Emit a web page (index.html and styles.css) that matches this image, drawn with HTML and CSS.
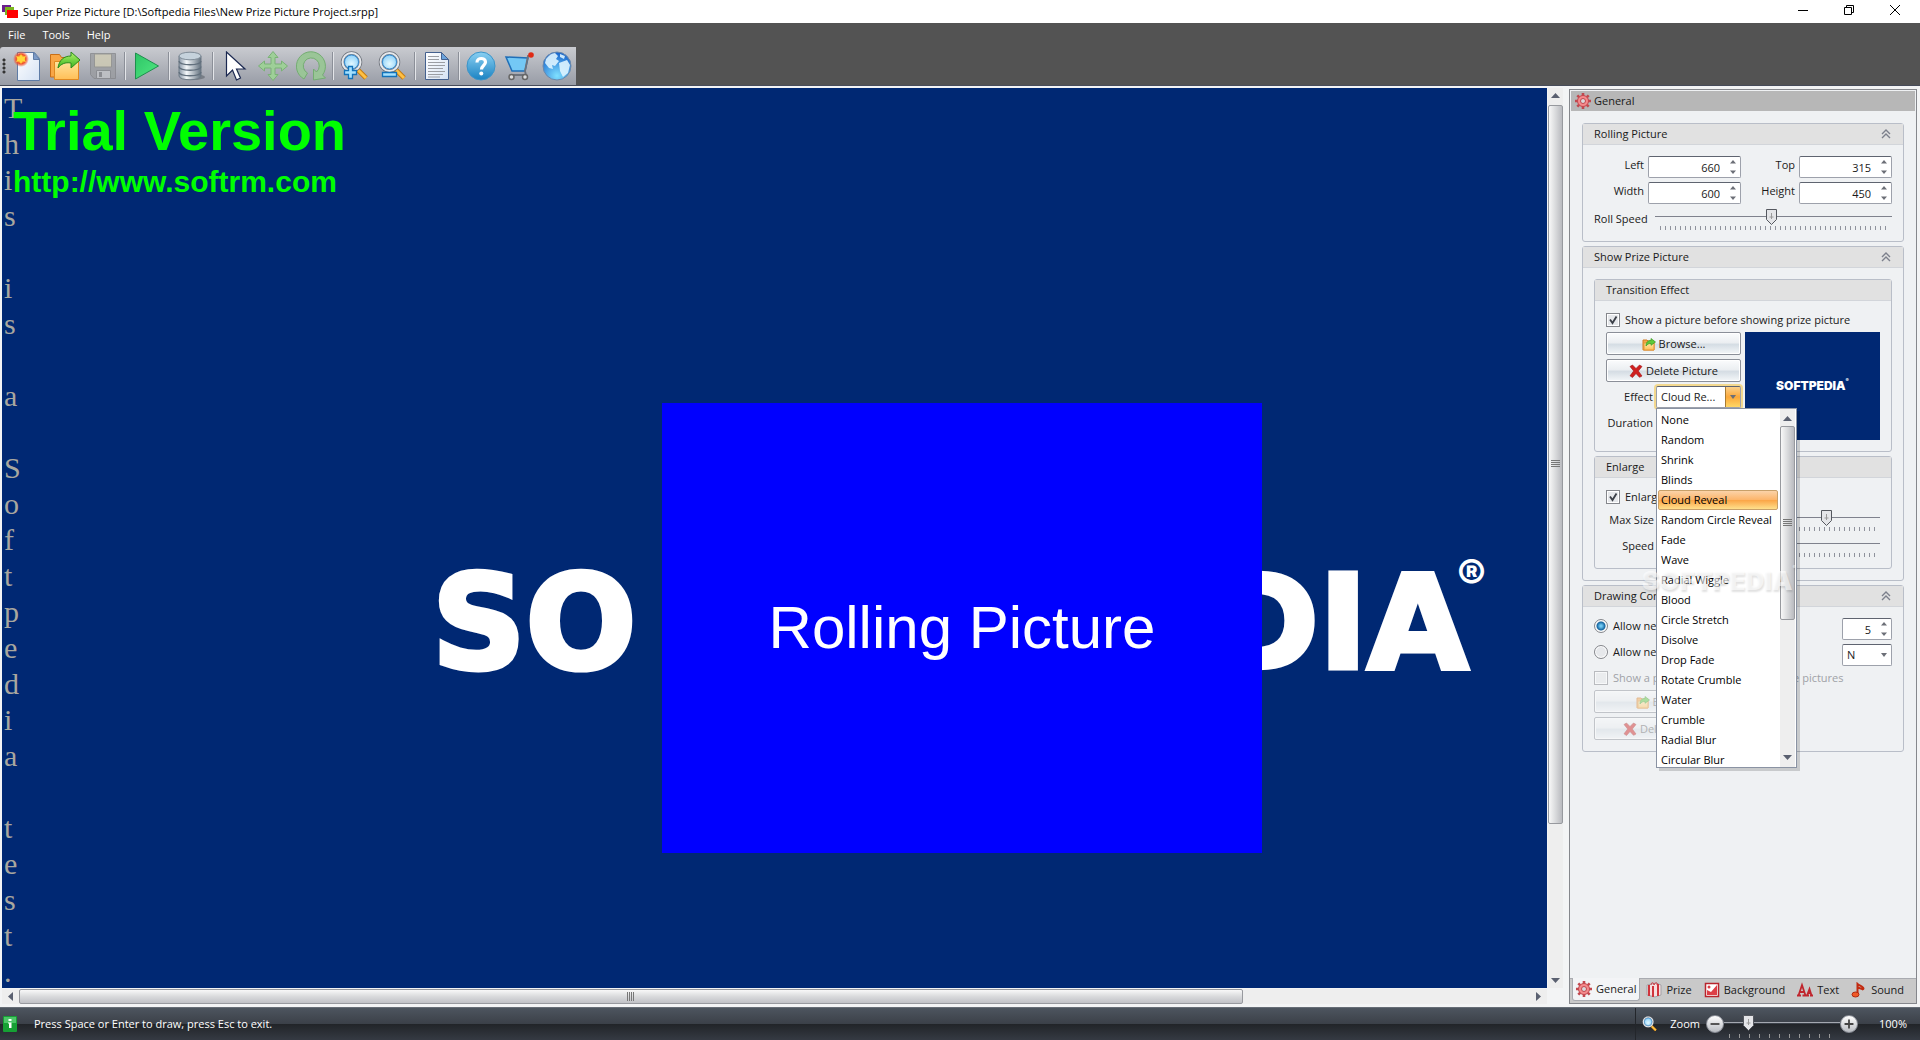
FILE: index.html
```html
<!DOCTYPE html>
<html lang="en">
<head>
<meta charset="utf-8">
<title>Super Prize Picture</title>
<link rel="stylesheet" href="styles.css">
</head>
<body>
<svg class="defs" width="0" height="0" aria-hidden="true">
  <defs>
    <linearGradient id="g-page" x1="0" y1="0" x2="1" y2="1"><stop offset="0" stop-color="#fff"/><stop offset="1" stop-color="#d5e2f4"/></linearGradient>
    <linearGradient id="g-folder" x1="0" y1="0" x2="0" y2="1"><stop offset="0" stop-color="#ffe9a8"/><stop offset="1" stop-color="#ffbf57"/></linearGradient>
    <linearGradient id="g-green" x1="0" y1="0" x2="0" y2="1"><stop offset="0" stop-color="#b5f26a"/><stop offset="1" stop-color="#38b521"/></linearGradient>
    <linearGradient id="g-play" x1="0" y1="0" x2="1" y2="1"><stop offset="0" stop-color="#2dc566"/><stop offset="1" stop-color="#52e882"/></linearGradient>
    <linearGradient id="g-db" x1="0" y1="0" x2="1" y2="0"><stop offset="0" stop-color="#8a98a8"/><stop offset=".35" stop-color="#f4f8fb"/><stop offset="1" stop-color="#64727f"/></linearGradient>
    <radialGradient id="g-lens" cx=".5" cy=".6" r=".6"><stop offset="0" stop-color="#e2f8ff"/><stop offset="1" stop-color="#7cc9f8"/></radialGradient>
    <radialGradient id="g-spark"><stop offset="0" stop-color="#fff27a"/><stop offset=".35" stop-color="#ffb62e"/><stop offset=".6" stop-color="#f0502a"/><stop offset="1" stop-color="#f0502a" stop-opacity="0"/></radialGradient>
    <linearGradient id="g-help" x1="0" y1="0" x2="0" y2="1"><stop offset="0" stop-color="#8ad0f2"/><stop offset="1" stop-color="#1a82c2"/></linearGradient>
    <radialGradient id="g-globe" cx=".5" cy=".85" r=".8"><stop offset="0" stop-color="#7fe0ff"/><stop offset="1" stop-color="#1b69cf"/></radialGradient>
    <symbol id="i-browse" viewBox="0 0 14 14">
      <path d="M1 3h4l1 1h6v9H1z" fill="#f3a64a" stroke="#d67d22"/>
      <path d="M2 6h10v7H2z" fill="url(#g-folder)" stroke="#e39636"/>
      <path d="M4 9c0-4 2-5.500 5-5.500V1.500l4.500 3.500L9 8.300V6.500C7 6.500 5.500 7 4 9z" fill="#5dc93a" stroke="#3a9b22" stroke-width=".7"/>
    </symbol>
    <symbol id="i-delete" viewBox="0 0 14 14">
      <path d="M1 2.500 3.500 1 7 4.500 10.500 1 13 2.500 9.300 7 13 12l-2.500 1.300L7 9.500l-3.500 4L1 11.800 4.700 7z" fill="#cf1f1f" stroke="#a01212" stroke-width=".6"/>
    </symbol>
    <symbol id="i-gear" viewBox="0 0 16 16">
      <g stroke="#c2484e" stroke-width="2.600"><path d="M8 0v16M0 8h16M2.300 2.300l11.400 11.400M13.700 2.300 2.300 13.700"/></g>
      <circle cx="8" cy="8" r="5.500" fill="#f58a8c" stroke="#c2484e"/>
      <circle cx="8" cy="8" r="2.500" fill="#d9d9dc" stroke="#c2484e"/>
    </symbol>
    <symbol id="i-up" viewBox="0 0 10 10"><path d="M1 5l4-4 4 4M1 9l4-4 4 4" fill="none" stroke="#7c808c" stroke-width="1.400"/></symbol>
    <symbol id="i-spin" viewBox="0 0 6 14"><path d="M0 3.500 3 0l3 3.500zM0 10.500h6L3 14z" fill="#6c6f77"/></symbol>
    <symbol id="i-lens" viewBox="0 0 30 30">
      <path d="M17 18l9 9" stroke="#c47a10" stroke-width="5"/><path d="M18 19l8 8" stroke="#ffc043" stroke-width="3"/>
      <circle cx="11.500" cy="11" r="9" fill="url(#g-lens)" stroke="#70757d" stroke-width="3.500"/>
      <circle cx="11.500" cy="11" r="9" fill="none" stroke="#e6e9ed" stroke-width="2"/>
      <circle cx="11.500" cy="11" r="7" fill="none" stroke="#3589cf"/>
    </symbol>
  </defs>
</svg>

<header class="titlebar">
  <svg class="app-icon" viewBox="0 0 16 14" aria-hidden="true"><path fill="#6b1f8e" d="M0 0h9v7H0z"/><path fill="#7ab51d" d="M3 2h9v8H3z"/><path fill="#f00" d="M5 5h11v8H5z"/></svg>
  <h1>Super Prize Picture [D:\Softpedia Files\New Prize Picture Project.srpp]</h1>
  <div class="win-buttons">
    <button aria-label="Minimize"><svg viewBox="0 0 10 10"><path d="M0 5.500h10"/></svg></button>
    <button aria-label="Restore"><svg viewBox="0 0 10 10"><path d="M.5 2.500h7v7h-7zM2.500 2.500v-2h7v7h-2"/></svg></button>
    <button aria-label="Close"><svg viewBox="0 0 10 10"><path d="M0 0l10 10M10 0 0 10"/></svg></button>
  </div>
</header>

<nav class="menubar"><button>File</button><button>Tools</button><button>Help</button></nav>

<div class="toolbar-row">
  <div class="toolbar" role="toolbar">
    <span class="grip"></span>
    <button aria-label="New"><svg viewBox="0 0 30 30"><path d="M5.500 1.500h17l5 6v22h-22z" fill="url(#g-page)" stroke="#5f7ca6"/><path d="M21.500 1.500v7h6z" fill="#7d9cc9" stroke="#5f7ca6"/><circle cx="9" cy="8" r="8" fill="url(#g-spark)"/><path d="M9 3l1.500 3L14 5l-1.500 3 1.500 3-3.500-1L9 13l-1.500-3L4 11l1.500-3L4 5l3.500 1z" fill="#ffd83a"/></svg></button>
    <button aria-label="Open"><svg viewBox="0 0 30 30"><path d="M.5 26V3.500h9l2 3h13V26z" fill="#f8a646" stroke="#c86f17"/><path d="M4.500 10.500h10l3-3h11v21h-24z" fill="url(#g-folder)" stroke="#e08a22"/><path d="M8 17c1-8 6-12 13-12V1l9 8-9 8v-5c-6-1-10 1-13 5z" fill="url(#g-green)" stroke="#2a8a1d"/></svg></button>
    <button aria-label="Save" class="dim"><svg viewBox="0 0 30 30"><path d="M2.500 2.500h25v25H6l-3.500-4z" fill="#9b9da1" stroke="#85878b"/><path d="M6.500 3h17v13h-17z" fill="#cfcbb4" stroke="#8f8f8b"/><path d="M8.500 19.500h14v8h-14z" fill="#c3c5c8" stroke="#85878b"/><path d="M11 21h3v5h-3z" fill="#85878b"/></svg></button>
    <i></i>
    <button aria-label="Run"><svg viewBox="0 0 30 30"><path d="M3.500 2v26L26.500 15z" fill="url(#g-play)" stroke="#1f8f4e"/></svg></button>
    <i></i>
    <button aria-label="Database"><svg viewBox="0 0 30 30"><ellipse cx="18" cy="26" rx="11" ry="3" fill="#5c626b" opacity=".6"/><path d="M3 5v20c0 5 22 5 22 0V5z" fill="url(#g-db)" stroke="#6e7a86"/><path d="M3 10c0 5 22 5 22 0M3 15.500c0 5 22 5 22 0M3 21c0 5 22 5 22 0" fill="none" stroke="#62707d" stroke-width="1.300"/><ellipse cx="14" cy="5" rx="11" ry="3.800" fill="#c5d2dc" stroke="#7f8c98"/></svg></button>
    <i></i>
    <button aria-label="Select"><svg viewBox="0 0 30 30"><path d="M6.500 1v24l6-6 4 10 4-2-4-9h8.500z" fill="#fff" stroke="#1b2850" stroke-width="1.200"/></svg></button>
    <button aria-label="Move"><svg viewBox="0 0 30 30"><path d="M15 .5l5 6h-3V13h6.500v-3l6 5-6 5v-3H17v6.500h3l-5 6-5-6h3V17H6.500v3l-6-5 6-5v3H13V6.500h-3z" fill="#9ecf98" stroke="#7ab276"/></svg></button>
    <button aria-label="Rotate"><svg viewBox="0 0 30 30"><path d="M8 28A14.500 14.500 0 1 1 26.500 24l3 3-12 2v-11l3 3a8 8 0 1 0-9 1z" fill="#9ac597" stroke="#74ad72"/></svg></button>
    <i></i>
    <button aria-label="Zoom in"><svg viewBox="0 0 30 30"><use href="#i-lens"/><path d="M8.500 15.500h4v4h4v4h-4v4h-4v-4h-4v-4h4z" fill="#a4e1ff" stroke="#1273bb" stroke-width="1.300"/></svg></button>
    <button aria-label="Zoom out"><svg viewBox="0 0 30 30"><use href="#i-lens"/><path d="M4.500 21.500h14v4h-14z" fill="#a4e1ff" stroke="#1273bb" stroke-width="1.300"/></svg></button>
    <i></i>
    <button aria-label="Report"><svg viewBox="0 0 30 30"><path d="M3.500 1.500h16l7 7v20h-23z" fill="url(#g-page)" stroke="#44618f"/><path d="M19.500 1.500v7h7z" fill="#6aa3dc" stroke="#44618f"/><path d="M6 5.500h11M6 8.500h11M6 11.500h17M6 14.500h17M6 17.500h15M6 20.500h17M6 23.500h15M6 26h12" stroke="#9a9da3"/></svg></button>
    <i></i>
    <button aria-label="Help"><svg viewBox="0 0 30 30"><circle cx="15" cy="15" r="14" fill="url(#g-help)" stroke="#3b94c9"/><path d="M11 11.500c0-5.500 8.500-5 8.500-.5 0 3.500-4 3.500-4 7.500" fill="none" stroke="#fff" stroke-width="3.200"/><circle cx="15.300" cy="22.500" r="2" fill="#fff"/></svg></button>
    <button aria-label="Buy"><svg viewBox="0 0 30 30"><path d="M2 6l22 1-3 13H8z" fill="#74c8f5" stroke="#1f6fb8" stroke-width="1.500"/><path d="M27 5h-3l-3 15 1 4H6" fill="none" stroke="#6d737d" stroke-width="1.800"/><circle cx="7.500" cy="26" r="2.500" fill="#ddd" stroke="#666" stroke-width="1.500"/><circle cx="21" cy="26" r="2.500" fill="#ddd" stroke="#666" stroke-width="1.500"/><circle cx="27" cy="4" r="2.800" fill="#e02a14"/></svg></button>
    <button aria-label="Website"><svg viewBox="0 0 30 30"><circle cx="15" cy="15" r="14" fill="url(#g-globe)" stroke="#6b88aa"/><path d="M4 8c3-4 6-6 9-6l3 3-2 3 3 2-4 5-3-1 1 4-4-1-4-5zM17 12l8-3 3 5-2 8-5 4-3-6zM18 3l5 2-1 3-4-2z" fill="#def4ff" opacity=".9"/></svg></button>
  </div>
</div>

<main class="workspace">
  <section class="viewer">
    <div class="canvas">
      <span class="brand brand-left">SO</span>
      <span class="brand brand-right">DIA</span>
      <span class="brand-mark">®</span>
      <p class="vertical-text">T
h
i
s

i
s

a

S
o
f
t
p
e
d
i
a

t
e
s
t
.</p>
      <div class="trial"><strong>Trial Version</strong><a href="http://www.softrm.com">http://www.softrm.com</a></div>
      <div class="rolling">Rolling Picture</div>
    </div>
    <div class="vscroll">
      <svg viewBox="0 0 9 5"><path d="M0 5h9L4.500 0z"/></svg>
      <div class="track"><div class="thumb"><b></b></div></div>
      <svg viewBox="0 0 9 5"><path d="M0 0h9L4.500 5z"/></svg>
    </div>
    <div class="hscroll">
      <svg viewBox="0 0 5 9"><path d="M5 0v9L0 4.500z"/></svg>
      <div class="track"><div class="thumb"><b></b></div></div>
      <svg viewBox="0 0 5 9"><path d="M0 0v9l5-4.500z"/></svg>
    </div>
  </section>

  <aside class="panel">
    <h2 class="panel-title"><svg class="ic16"><use href="#i-gear"/></svg>General</h2>
    <div class="panel-body">
      <section class="group">
        <h3>Rolling Picture <svg class="ic10"><use href="#i-up"/></svg></h3>
        <div class="group-body">
          <div class="bounds">
            <label for="left">Left</label><span class="spin"><input id="left" type="number" value="660"><svg><use href="#i-spin"/></svg></span>
            <label for="top">Top</label><span class="spin"><input id="top" type="number" value="315"><svg><use href="#i-spin"/></svg></span>
            <label for="width">Width</label><span class="spin"><input id="width" type="number" value="600"><svg><use href="#i-spin"/></svg></span>
            <label for="height">Height</label><span class="spin"><input id="height" type="number" value="450"><svg><use href="#i-spin"/></svg></span>
          </div>
          <div class="slide-row"><label for="roll" class="w56">Roll Speed</label><span class="slider"><input id="roll" type="range" value="49"></span></div>
        </div>
      </section>

      <section class="group">
        <h3>Show Prize Picture <svg class="ic10"><use href="#i-up"/></svg></h3>
        <div class="group-body">
          <section class="group">
            <h3>Transition Effect</h3>
            <div class="group-body">
              <label class="check"><input type="checkbox" checked>Show a picture before showing prize picture</label>
              <div class="transition">
                <div class="stack">
                  <button class="btn"><svg class="ic14"><use href="#i-browse"/></svg>Browse...</button>
                  <button class="btn"><svg class="ic14"><use href="#i-delete"/></svg>Delete Picture</button>
                  <div class="field">
                    <label for="effect">Effect</label>
                    <div class="combo open">
                      <select id="effect"><option>Cloud Re...</option></select>
                      <div class="popup">
                        <ul role="listbox" aria-label="Effect">
                          <li role="option">None</li><li role="option">Random</li><li role="option">Shrink</li><li role="option">Blinds</li>
                          <li role="option" aria-selected="true">Cloud Reveal</li><li role="option">Random Circle Reveal</li><li role="option">Fade</li>
                          <li role="option">Wave</li><li role="option">Radial Wiggle</li><li role="option">Blood</li><li role="option">Circle Stretch</li>
                          <li role="option">Disolve</li><li role="option">Drop Fade</li><li role="option">Rotate Crumble</li><li role="option">Water</li>
                          <li role="option">Crumble</li><li role="option">Radial Blur</li><li role="option">Circular Blur</li>
                        </ul>
                        <div class="vscroll">
                          <svg viewBox="0 0 9 5"><path d="M0 5h9L4.500 0z"/></svg>
                          <div class="track"><div class="thumb"><b></b></div></div>
                          <svg viewBox="0 0 9 5"><path d="M0 0h9L4.500 5z"/></svg>
                        </div>
                      </div>
                    </div>
                  </div>
                  <div class="field"><label for="duration">Duration</label><span class="spin"><input id="duration" type="number"></span></div>
                </div>
                <div class="preview"><span>SOFTPEDIA<sup>®</sup></span></div>
              </div>
            </div>
          </section>
          <section class="group">
            <h3>Enlarge</h3>
            <div class="group-body">
              <label class="check"><input type="checkbox" checked>Enlarge</label>
              <div class="slide-row"><label for="max" class="w48">Max Size</label><span class="slider"><input id="max" type="range" value="77"></span></div>
              <div class="slide-row"><label for="speed" class="w48">Speed</label><span class="slider"><input id="speed" type="range" value="40"></span></div>
            </div>
          </section>
        </div>
      </section>

      <section class="group">
        <h3>Drawing Control <svg class="ic10"><use href="#i-up"/></svg></h3>
        <div class="group-body">
          <div class="option-row"><label class="check"><input type="radio" name="next" checked>Allow next</label><span class="spin"><input type="number" value="5" aria-label="Seconds"><svg><use href="#i-spin"/></svg></span></div>
          <div class="option-row"><label class="check"><input type="radio" name="next">Allow next</label><select class="key" aria-label="Key"><option>N</option></select></div>
          <label class="check off"><input type="checkbox" disabled>Show a picture before showing prize pictures</label>
          <button class="btn half" disabled><svg class="ic14"><use href="#i-browse"/></svg>Browse...</button>
          <button class="btn half" disabled><svg class="ic14"><use href="#i-delete"/></svg>Delete Picture</button>
        </div>
      </section>
    </div>
    <div class="watermark" aria-hidden="true">SOFTPEDIA<sup>®</sup></div>
    <nav class="tabs">
      <button class="active"><svg class="ic16"><use href="#i-gear"/></svg>General</button>
      <button><svg class="ic16" viewBox="0 0 16 16"><path d="M1 3l9-2 5 2v10l-6 2-8-2z" fill="#f6dede" stroke="#a3a3a8"/><path d="M3 3v11M7 4v11M12 2v12" stroke="#d0343c" stroke-width="2"/><path d="M5 3c0-3 3-3 3 0 1-3 4-3 3 0" fill="none" stroke="#d0343c"/></svg>Prize</button>
      <button><svg class="ic16" viewBox="0 0 16 16"><path d="M1.500 1.500h13v13h-13z" fill="#fff" stroke="#b8242c" stroke-width="1.500"/><path d="M3 13V8l4 2 6-7v10z" fill="#dd3e46"/><circle cx="5" cy="5" r="1.500" fill="#dd3e46"/></svg>Background</button>
      <button><svg class="ic16" viewBox="0 0 16 16"><path d="M0 13.500h4M5.500 13.500H9M1.500 13.500 5 3l3.500 10.500M3 10h4M9 13.500h3M13 13.500h3M10 13.500 12.500 7l2 6.500M11 11h3" fill="none" stroke="#c0262e" stroke-width="1.800"/></svg>Text</button>
      <button><svg class="ic16" viewBox="0 0 16 16"><path d="M6.500 12V2c2 2 6 2 6 5M6.500 5c2 2 5 1 6 3" fill="none" stroke="#c22a10" stroke-width="2"/><ellipse cx="4.500" cy="12.500" rx="3.500" ry="2.500" fill="#f05a28" stroke="#b02a10"/></svg>Sound</button>
    </nav>
  </aside>
</main>

<footer class="statusbar">
  <svg class="info" viewBox="0 0 14 16" aria-hidden="true"><rect width="14" height="16" rx="1" fill="#16a034"/><path d="M1 1h12v6H1z" fill="#4cc667"/><path d="M5.500 3h3v2h-3zM5 6.500h3.500V12H6V7.500H5z" fill="#fff"/></svg>
  <span class="hint">Press Space or Enter to draw, press Esc to exit.</span>
  <div class="zoom">
    <svg class="ic16 mag"><use href="#i-lens"/></svg>
    <label for="zoom">Zoom</label>
    <button aria-label="Zoom out"><svg viewBox="0 0 18 18"><path d="M4 9h10"/></svg></button>
    <span class="slider"><input id="zoom" type="range" value="18"></span>
    <button aria-label="Zoom in"><svg viewBox="0 0 18 18"><path d="M4 9h10M9 4v10"/></svg></button>
    <output for="zoom">100%</output>
  </div>
</footer>
</body>
</html>
```
FILE: styles.css
```css
* { box-sizing: border-box; }
body { margin: 0; min-height: 100vh; display: flex; flex-direction: column; background: #eff1f3; color: #1a1a1a; font: 11px/16px "Open Sans", "Noto Sans", sans-serif; }
button, input, select { font: inherit; color: inherit; margin: 0; }
button { border: 0; background: none; padding: 0; }
h1, h2, h3, p, ul { margin: 0; padding: 0; font-size: inherit; font-weight: 400; }
.defs { position: absolute; }
svg { flex: none; }
.ic16 { width: 16px; height: 16px; }
.ic14 { width: 14px; height: 14px; }
.ic10 { width: 10px; height: 10px; }

.titlebar { display: flex; align-items: center; height: 23px; background: #fff; color: #000; padding: 0 2px; gap: 5px; }
.app-icon { width: 16px; height: 14px; }
.titlebar h1 { flex: 1; }
.win-buttons { display: flex; }
.win-buttons button { width: 46px; height: 22px; padding-bottom: 2px; }
.win-buttons svg { width: 10px; height: 10px; fill: none; stroke: #000; }

.menubar { display: flex; height: 24px; background: #535353; color: #fff; padding-left: 8px; gap: 17px; }

.toolbar-row { display: flex; background: #535353; border-bottom: 1px solid #474c5a; }
.toolbar { display: flex; align-items: center; height: 38px; border-radius: 3px 0 0 0; background: linear-gradient(#c9cbd0, #989ca6); }
.toolbar .grip { width: 8px; height: 16px; background: radial-gradient(circle at 4px 2px, #333 1px, transparent 2px) 0 0 / 8px 4px; }
.toolbar button { width: 38px; height: 38px; display: grid; place-items: center; }
.toolbar svg { width: 30px; height: 30px; }
.toolbar .dim { opacity: .8; }
.toolbar i { width: 6px; height: 28px; background: linear-gradient(90deg, transparent 2px, #8b8f98 2px 3px, #e3e5e9 3px 4px, transparent 4px); }

.workspace { flex: 1; display: flex; background: #f3f4f5; padding: 2px 3px 3px 2px; gap: 6px; }
.viewer { flex: 1; display: grid; grid-template-columns: 1fr 15px; grid-template-rows: 1fr 16px; column-gap: 1px; }
.canvas { position: relative; overflow: hidden; background: #002873; }
.vertical-text { position: absolute; left: 2px; top: 2px; white-space: pre; font: 30px/36px "Liberation Serif", serif; color: #a9a79f; }
.trial { position: absolute; left: 11px; top: 11px; display: grid; gap: 3px; font: bold 30px/32px "Liberation Sans", sans-serif; color: #0f0; }
.trial strong { font-size: 56px; line-height: 64px; }
.trial a { color: inherit; text-decoration: none; }
.rolling { position: absolute; left: 660px; top: 315px; width: 600px; height: 450px; display: grid; place-items: center; background: #00f; color: #fff; font: 60px/68px "Liberation Sans", sans-serif; }
.brand { position: absolute; top: 455px; color: #fff; font: bold 130px/160px "DejaVu Sans", sans-serif; -webkit-text-stroke: 5px #fff; }
.brand-left { left: 430px; }
.brand-right { right: 79px; }
.brand-mark { position: absolute; right: 61px; top: 463px; color: #fff; font: 900 44px/48px Inter, sans-serif; }

.vscroll { display: flex; flex-direction: column; align-items: center; padding: 5px 0; gap: 7px; background: #eee; }
.vscroll svg { width: 9px; height: 5px; fill: #5a6070; }
.vscroll .track { flex: 1; width: 100%; }
.thumb { display: grid; place-items: center; border: 1px solid #97999e; border-radius: 2px; }
.vscroll .thumb { height: 83%; background: linear-gradient(90deg, #f8f8f8, #d9dadc 50%, #b9babf); }
.vscroll b { width: 9px; height: 8px; background: repeating-linear-gradient(#777 0 1px, transparent 1px 2px); }
.hscroll { display: flex; align-items: center; padding: 0 6px; gap: 6px; background: #eee; margin-top: 1px; height: 15px; }
.hscroll svg { width: 5px; height: 9px; fill: #5a6070; }
.hscroll .track { flex: 1; height: 100%; }
.hscroll .thumb { width: 81%; height: 100%; background: linear-gradient(#f8f8f8, #d9dadc 50%, #c0c1c6); }
.hscroll b { width: 8px; height: 9px; background: repeating-linear-gradient(90deg, #777 0 1px, transparent 1px 2px); }

.panel { position: relative; width: 348px; margin-top: 1px; border: 1px solid #85878c; background: #eff1f3; display: flex; flex-direction: column; }
.panel-title { display: flex; align-items: center; gap: 3px; height: 20px; margin: 1px; padding-left: 4px; background: #b7b7b7; }
.panel-body { flex: 1; display: grid; align-content: start; gap: 4px; padding: 12px; padding-top: 11px; }
.group { border: 1px solid #b9bec8; border-radius: 3px; }
.group h3 { display: flex; align-items: center; justify-content: space-between; height: 21px; padding: 0 12px 0 11px; background: #e1e1e1; border-bottom: 1px solid #d2d5da; }
.group-body { display: grid; gap: 4px; padding: 11px; }
.bounds { display: grid; grid-template-columns: 50px 1fr 50px 1fr; gap: 4px; }
.bounds label, .field label, .slide-row label { text-align: right; line-height: 22px; white-space: nowrap; }
.bounds label { line-height: 18px; }
.spin { display: flex; align-items: center; height: 22px; padding-right: 4px; background: #fff; border: 1px solid #9da1ab; border-top-color: #5f6470; border-radius: 2px; }
.spin input { flex: 1; width: 0; min-width: 0; border: 0; padding: 2px 10px 0 0; background: none; text-align: right; appearance: textfield; }
.spin input::-webkit-inner-spin-button { appearance: none; }
.spin svg { width: 6px; height: 14px; }

.slide-row { display: flex; gap: 5px; height: 22px; }
.slide-row .w56 { width: 56px; text-align: left; }
.w48 { width: 48px; }
.slider { flex: 1; display: block; height: 22px; background: repeating-linear-gradient(90deg, #8f929c 0 1px, transparent 1px 5px) 5px 18px / calc(100% - 10px) 4px no-repeat; }
.slider input { display: block; width: 100%; height: 18px; margin: 0; appearance: none; background: linear-gradient(#7f828d, #7f828d) 0 8px / 100% 1px no-repeat; }
.slider input::-webkit-slider-thumb { appearance: none; width: 11px; height: 16px; background: url("data:image/svg+xml,%3Csvg xmlns='http://www.w3.org/2000/svg' viewBox='0 0 11 16'%3E%3Cpath d='M.5.5h10v10l-5 5-5-5z' fill='%23e4e5e8' stroke='%2355585f'/%3E%3Cpath d='M5.500 4v6M3.500 8h4' stroke='%23999'/%3E%3C/svg%3E"); }

.check { display: flex; align-items: center; gap: 5px; height: 16px; white-space: nowrap; }
.check input { appearance: none; flex: none; width: 14px; height: 14px; border: 1px solid #85878c; background: #e6e8eb; box-shadow: inset 0 0 0 1px #fff; }
.check input[type=checkbox]:checked { background: #e6e8eb url("data:image/svg+xml,%3Csvg xmlns='http://www.w3.org/2000/svg' viewBox='0 0 12 12'%3E%3Cpath d='M3 5.500l2.500 3.500L9.500 2.500' fill='none' stroke='%233c4048' stroke-width='1.800'/%3E%3C/svg%3E"); }
.check input[type=radio] { border-radius: 50%; }
.check input[type=radio]:checked { background: radial-gradient(circle, #6fc8f2 0 1px, #1565a0 4px, #e6e8eb 5px); }
.off { color: #a0a2a7; }
.off input { opacity: .5; }

.btn { display: flex; align-items: center; justify-content: center; gap: 3px; height: 23px; border: 1px solid #8b8f98; border-radius: 2px; background: linear-gradient(#fbfcfd, #eceff2 45%, #d5dde4 55%, #f4f7f9); box-shadow: inset 0 0 0 1px #fff; }
.btn:disabled { opacity: .45; color: #666; }
.half { width: 147px; }

.transition { display: grid; grid-template-columns: 1fr 1fr; gap: 4px; }
.stack { display: grid; gap: 4px; align-content: start; }
.field { display: grid; grid-template-columns: 47px 1fr; gap: 3px; height: 22px; }
.combo { position: relative; }
select { display: block; width: 100%; height: 22px; padding: 0 4px; border: 1px solid #9da1ab; border-top-color: #5f6470; border-radius: 2px; appearance: none; background: #fff url("data:image/svg+xml,%3Csvg xmlns='http://www.w3.org/2000/svg' width='6' height='4'%3E%3Cpath d='M0 0h6L3 4z' fill='%236c6f77'/%3E%3C/svg%3E") no-repeat right 4px center; }
.open select { box-shadow: 0 0 0 2px #f3d88e; background: url("data:image/svg+xml,%3Csvg xmlns='http://www.w3.org/2000/svg' width='6' height='4'%3E%3Cpath d='M0 0h6L3 4z' fill='%236c6f77'/%3E%3C/svg%3E") no-repeat right 4px center, linear-gradient(90deg, #a87b33 0 1px, transparent 1px) right / 15px 100% no-repeat, linear-gradient(#fbd08a, #fba83a 50%, #ffd765) right / 15px 100% no-repeat, #fff; }
.popup { position: absolute; z-index: 2; top: 22px; left: 0; width: 141px; height: 360px; display: grid; grid-template-columns: 1fr 15px; gap: 2px; padding: 0 1px; overflow: hidden; background: #fff; border: 1px solid #8a93a3; box-shadow: 3px 3px 0 rgb(0 0 0 / 16%); color: #000; }
.popup ul { list-style: none; padding: 1px 0 0; }
.popup li { height: 20px; padding-left: 2px; border: 1px solid transparent; line-height: 18px; white-space: nowrap; }
.popup li[aria-selected] { border-color: #c8a069; border-radius: 2px; background: linear-gradient(#fbd3a8, #fcb469 50%, #fba648 52%, #ffe08c); }
.popup .vscroll { height: 358px; padding: 7px 0; gap: 5px; }
.popup .vscroll .thumb { height: 60%; }
.preview { display: grid; place-items: center; height: 108px; background: #002873; color: #fff; font: 900 12px/16px Inter, sans-serif; }
sup { font-size: 5px; line-height: 5px; vertical-align: top; }
.option-row { display: flex; justify-content: space-between; align-items: flex-start; height: 22px; }
.option-row .spin, .option-row .key { width: 50px; }
.watermark { position: absolute; z-index: 3; left: 72px; top: 475px; font: 900 26px/32px Inter, sans-serif; color: rgb(255 255 255 / 60%); text-shadow: 1px 2px 2px rgb(0 0 0 / 12%); pointer-events: none; }

.tabs { display: flex; height: 25px; padding: 0 2px; background: #c9c9c9; border-top: 1px solid #a9abb0; }
.tabs button { display: flex; align-items: center; gap: 4px; padding: 0 6px 3px; }
.tabs .active { margin-top: -1px; padding: 0 3px; height: 23px; background: #f3f4f6; border: 1px solid #a9abb0; border-top: 0; border-radius: 0 0 3px 3px; }

.statusbar { display: flex; align-items: center; height: 33px; padding: 0 13px 0 3px; color: #fff; background: linear-gradient(#4d555f, #3b4048 50%, #212428 50%, #353a43); border-top: 1px solid #666d76; }
.info { width: 14px; height: 16px; }
.hint { flex: 1; padding-left: 17px; }
.zoom { display: flex; align-items: center; height: 100%; padding-left: 6px; border-left: 1px solid #23262b; }
.zoom label { padding: 0 6px 0 12px; }
.zoom button { width: 18px; height: 18px; border-radius: 50%; background: linear-gradient(#fff, #b9bcc2); border: 1px solid #8b8f98; display: grid; place-items: center; }
.zoom button svg { width: 16px; height: 16px; fill: none; stroke: #444; stroke-width: 2; }
.zoom .slider { width: 116px; flex: none; height: 28px; padding-top: 4px; background-position: 5px 24px; background-image: repeating-linear-gradient(90deg, #999 0 1px, transparent 1px 10px); }
.zoom .slider input { background-image: linear-gradient(#a4a8b0, #a4a8b0); }
.zoom output { padding-left: 21px; }
```
